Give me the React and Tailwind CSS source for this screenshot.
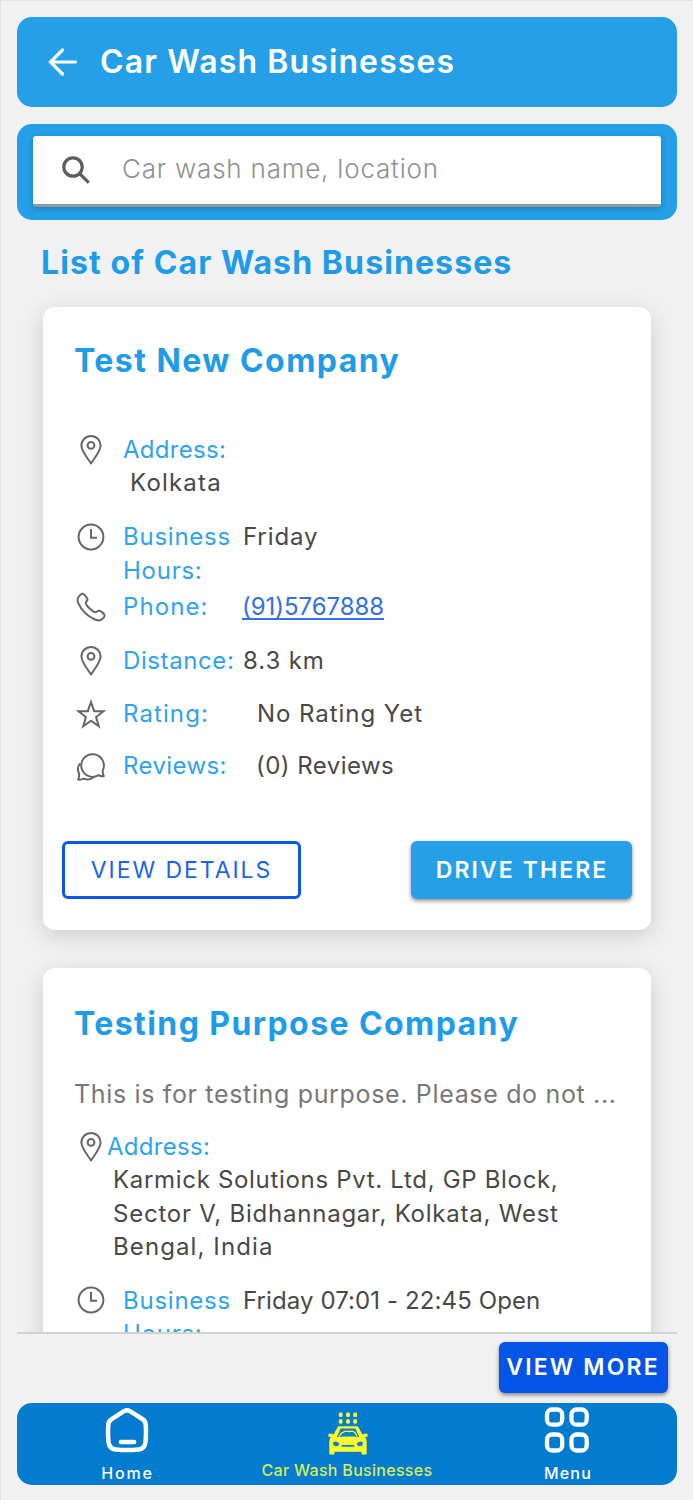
import React from 'react';

const businesses = [
  {
    id: 1,
    name: 'Test New Company',
    address: ['Kolkata'],
    hours: 'Friday',
    phone: '(91)5767888',
    distance: '8.3 km',
    rating: 'No Rating Yet',
    reviews: '(0) Reviews',
  },
  {
    id: 2,
    name: 'Testing Purpose Company',
    description: 'This is for testing purpose. Please do not ...',
    address: ['Karmick Solutions Pvt. Ltd, GP Block,', 'Sector V, Bidhannagar, Kolkata, West', 'Bengal, India'],
    hours: 'Friday 07:01 - 22:45 Open',
  },
];

function Icon({ children }) {
  return (
    <svg className="h-[30px] w-[30px] shrink-0 text-[#666]" viewBox="0 0 30 30" fill="none" stroke="currentColor" strokeWidth="2" strokeLinejoin="round" strokeLinecap="round">
      {children}
    </svg>
  );
}

const PinIcon = () => (
  <Icon>
    <path d="M15 28.5C12.8 24.6 5.4 16.6 5.4 10.6a9.6 9.6 0 0 1 19.2 0c0 6-7.4 14-9.6 17.9z" />
    <circle cx="15" cy="10.4" r="3.4" />
  </Icon>
);

const ClockIcon = () => (
  <Icon>
    <circle cx="15" cy="15" r="12.4" />
    <path d="M15 7v8.7h6" strokeLinecap="butt" strokeLinejoin="miter" />
  </Icon>
);

const PhoneIcon = () => (
  <Icon>
    <path d="M2.6 4.8C3.8 3 5.4 1.6 6.6 1.7c1.7.2 4.2 3.8 4.8 5.4.6 1.6-1.5 2.6-1.6 3.8-.1 2.6 7.2 9.4 9.7 9.3 1.3 0 2.2-2 3.8-1.5 1.7.5 5.1 3 5.3 4.8.1 1.4-1.6 3-3.2 4.1-1.7 1.1-4.3.9-6.4-.1C11.8 24.3 5.5 18 2.4 11.3c-.9-2-1-4.9.2-6.5z" />
  </Icon>
);

const StarIcon = () => (
  <Icon>
    <path strokeLinejoin="miter" d="M15 3l3.2 9.200h9.300l-7.400 5.800 2.700 9.200-7.800-5.500-7.800 5.500 2.700-9.200-7.400-5.800h9.300z" />
  </Icon>
);

const ChatIcon = () => (
  <Icon>
    <path d="M27.8 25.2c-1.7.2-3.9-.2-5.4-1a11.3 11.3 0 1 1 4.3-4.7c-.2 1.9.5 3.9 1.1 5.7z" />
    <path d="M3.6 13c-2.2 3.1-2.1 6.5-.5 9.7.2 1.9-.1 3.9-.9 5.9 2 .2 3.900-.1 5.700-.9 3.100 1.100 6.300.9 8.900-1" />
  </Icon>
);

function Label({ children, className = '' }) {
  return <span className={`text-[#2fa3ec] ${className}`}>{children}</span>;
}

function Line({ icon, label, labelClass, children, className = '' }) {
  return (
    <div className={`flex ${className}`}>
      <div className="flex h-[33px] items-center">{icon}</div>
      <Label className={`ml-[17px] w-[120px] shrink-0 ${labelClass}`}>{label}</Label>
      {children}
    </div>
  );
}

function BusinessCard({ business }) {
  const { description } = business;
  return (
    <div className="mx-auto w-[608px] rounded-[12px] bg-white shadow-[0_6px_24px_rgba(0,0,0,0.15)]">
      <div className={`pl-[31px] ${description ? 'pt-[32.5px]' : 'pt-[31px]'}`}>
        <h2 className={`h-[45px] text-[32px] leading-[45px] font-bold whitespace-nowrap text-[#1e9be9] ${description ? 'tracking-[1.42px]' : 'tracking-[1.45px]'}`}>
          {business.name}
        </h2>
      </div>

      {description && (
        <p className="mt-[31.5px] h-[34px] pl-[31px] text-[25px] leading-[34px] tracking-[0.66px] whitespace-nowrap text-[#777]">{description}</p>
      )}

      <div className="pl-[33px] text-[24px] leading-[33.3px] whitespace-nowrap text-[#484848]">
        {description ? (
          <div className="mt-[19px]">
            <div className="flex">
              <div className="flex h-[33px] items-center"><PinIcon /></div>
              <Label className="ml-[1px] tracking-[0.3px]">Address:</Label>
            </div>
            <div className="pl-[37px]">
              <p className="tracking-[0.68px]">{business.address[0]}</p>
              <p className="tracking-[0.77px]">{business.address[1]}</p>
              <p className="tracking-[1.1px]">{business.address[2]}</p>
            </div>
          </div>
        ) : (
          <div className="mt-[50px]">
            <Line icon={<PinIcon />} label="Address:" labelClass="tracking-[0.3px]" />
            <p className="pl-[54px] tracking-[1.2px]">{business.address[0]}</p>
          </div>
        )}

        <Line icon={<ClockIcon />} label={<>Business<br />Hours:</>} labelClass="tracking-[0.75px]" className={description ? 'mt-[20.5px]' : 'mt-[20.7px]'}>
          <span className={description ? 'tracking-[0.1px]' : 'tracking-[0.9px]'}>{business.hours}</span>
        </Line>

        {business.phone && (
          <>
            <Line icon={<PhoneIcon />} label="Phone:" labelClass="tracking-[1.1px]" className="mt-[3.3px]">
              <a className="-ml-[1px] tracking-[-0.05px] text-[#3171e0] underline decoration-2 underline-offset-3" href="tel:915767888">{business.phone}</a>
            </Line>
            <Line icon={<PinIcon />} label="Distance:" labelClass="tracking-[0.6px]" className="mt-[21px]">
              <span className="tracking-[0.9px]">{business.distance}</span>
            </Line>
            <Line icon={<StarIcon />} label="Rating:" labelClass="tracking-[1.1px]" className="mt-[19.3px]">
              <span className="ml-[14px] tracking-[0.95px]">{business.rating}</span>
            </Line>
            <Line icon={<ChatIcon />} label="Reviews:" labelClass="tracking-[0.4px]" className="mt-[19px]">
              <span className="ml-[13px] tracking-[0.45px]">{business.reviews}</span>
            </Line>
          </>
        )}
      </div>

      {business.phone && (
        <div className="mt-[58.5px] flex justify-between px-[19px] text-[23px]">
          <button className="h-[58px] w-[239px] rounded-[6px] border-3 border-[#0a58ea] bg-white font-normal tracking-[1.95px] whitespace-nowrap text-[#1a64ec]">
            VIEW DETAILS
          </button>
          <button className="h-[58px] w-[221px] rounded-[6px] bg-[#249fe8] pl-[1px] font-semibold tracking-[2.08px] whitespace-nowrap text-white shadow-[0_2px_4px_rgba(0,0,0,0.45)]">
            DRIVE THERE
          </button>
        </div>
      )}
      <div className="h-[31px]" />
    </div>
  );
}

function CarWashIcon() {
  return (
    <svg className="ml-[2px] h-[44px] w-[40px]" viewBox="0 0 40 44" fill="#fdfd2e">
      {[12.5, 19.8, 27].map((x) => (
        <g key={x}>
          <rect x={x - 1.7} y="1.5" width="3.8" height="4.6" rx="1.4" />
          <rect x={x - 1.7} y="8.3" width="3.8" height="4.4" rx="1.4" />
        </g>
      ))}
      <path d="M11.500 15.300h17c1 0 1.600.4 2.100 1.200l4 7.200 1-1h3.200c.5 0 .8.4.8.900v1.400c0 .6-.5 1-1 1h-1.400c1 1.700 1.500 3.500 1.500 5.500v10.600c0 1-.5 1.500-1.400 1.500h-2.400c-.9 0-1.400-.5-1.400-1.500v-1.400h-27v1.400c0 1-.5 1.500-1.400 1.500H2.700c-.9 0-1.400-.5-1.400-1.500V31.500c0-2 .5-3.800 1.500-5.500H1.400c-.5 0-1-.4-1-1v-1.400c0-.5.3-.9.800-.9h3.200l1 1 4-7.200c.5-.8 1.100-1.200 2.100-1.200z" />
      <g fill="#0b7fc9">
        <path d="M12.6 17.5h14.8l3.9 8.7c-6-.8-16.6-.8-22.6 0z" />
        <ellipse cx="8" cy="32.8" rx="3.1" ry="2.2" transform="rotate(15 8 32.8)" />
        <ellipse cx="32" cy="32.8" rx="3.1" ry="2.2" transform="rotate(-15 32 32.8)" />
        <rect x="13.5" y="34" width="13" height="1.8" rx=".9" />
      </g>
      <path d="M11 25.4c1.5-3 4-4.7 7-5.3l3 .6 3-.6c3 .6 4 2.3 5 5.3" fill="none" stroke="#fdfd2e" strokeWidth="1.2" />
    </svg>
  );
}

function BottomNav() {
  return (
    <nav className="mx-auto flex h-[82px] w-[660px] rounded-[15px] bg-[#037bce] text-[16px] leading-[20px] font-medium whitespace-nowrap text-white">
      <div className="flex w-[220px] flex-col items-center pt-[4px]">
        <svg className="h-[46px] w-[46px]" viewBox="0 0 44 44" fill="none" stroke="white" strokeWidth="4.3" strokeLinejoin="round" strokeLinecap="round">
          <path d="M19.5 3.8c1.7-1 3.3-1 5 0l12.2 7.7c2 1.3 3.2 3 3.2 5.500.4 6 .4 11.500-.3 17-.6 4-2.800 6.200-6.600 6.600-7.300.7-14.700.7-22 0-3.800-.4-6-2.600-6.600-6.600-.7-5.500-.7-11-.3-17 0-2.500 1.200-4.200 3.200-5.500z" />
          <path d="M16.2 33.5h12.6" />
        </svg>
        <span className="mt-[9.5px] pl-[1px] tracking-[1.8px]">Home</span>
      </div>
      <div className="flex w-[220px] flex-col items-center pt-[8px] text-[#d6ef58]">
        <CarWashIcon />
        <span className="mt-[5px] tracking-[0.3px]">Car Wash Businesses</span>
      </div>
      <div className="flex w-[220px] flex-col items-center pt-[3px]">
        <svg className="h-[48px] w-[46px]" viewBox="0 0 46 48" fill="none" stroke="white" strokeWidth="4.3">
          <rect x="3" y="3.5" width="15.2" height="15.2" rx="5" />
          <rect x="27.5" y="3.5" width="15.2" height="15.2" rx="5" />
          <rect x="3" y="28.5" width="15.2" height="16" rx="5" />
          <rect x="27.5" y="28.5" width="15.2" height="16" rx="5" />
        </svg>
        <span className="mt-[8.5px] pl-[2px] tracking-[1.2px]">Menu</span>
      </div>
    </nav>
  );
}

function App() {
  return (
    <div className="h-[1500px] w-[693px] overflow-hidden border-t border-l border-[#e3e3ea] bg-[#f1f1f1] font-['Inter','Liberation_Sans',sans-serif]">
      <div className="flex h-[1331px] flex-col overflow-hidden pt-[16px]">
        <header className="mx-auto flex h-[90px] w-[660px] shrink-0 items-center rounded-[15px] bg-[#249fe8] pl-[31px] text-white">
          <svg className="h-[30px] w-[30px]" viewBox="0 0 30 30" fill="none" stroke="white" strokeWidth="3.2" strokeLinecap="round">
            <path d="M14.5 3L2.5 15l12 12M3 15h24.5" />
          </svg>
          <h1 className="ml-[22px] text-[32px] font-semibold tracking-[1.12px] whitespace-nowrap">Car Wash Businesses</h1>
        </header>

        <div className="mx-auto mt-[16.5px] h-[96px] w-[660px] shrink-0 rounded-[15px] bg-[#249fe8] px-[16px] pt-[12.5px]">
          <div className="flex h-[71px] items-center rounded-[3px] border-b-3 border-[#8f999f] bg-white pl-[28px] shadow-[0_2px_6px_rgba(0,0,0,0.2)]">
            <svg className="h-[30px] w-[30px]" viewBox="0 0 30 30" fill="none" stroke="#5c5c5c" strokeWidth="3.2">
              <circle cx="12" cy="12" r="9.2" />
              <path d="M18.7 18.7l9 9" />
            </svg>
            <span className="-mt-[3px] ml-[31px] text-[26px] font-light tracking-[0.8px] whitespace-nowrap text-[#909090]">Car wash name, location</span>
          </div>
        </div>

        <h2 className="mt-[22.5px] h-[42px] shrink-0 pl-[40px] text-[32px] leading-[42px] font-bold tracking-[1.1px] whitespace-nowrap text-[#1e9be9]">
          List of Car Wash Businesses
        </h2>

        <div className="mt-[23px] flex flex-col gap-[38px]">
          {businesses.map((b) => <BusinessCard key={b.id} business={b} />)}
        </div>
      </div>

      {/* View more bar */}
      <div className="mx-auto flex h-[71px] w-[660px] justify-end border-t-2 border-[#d2d2d2] pt-[8px] pr-[9.5px]">
        <button className="h-[51px] w-[169px] rounded-[6px] bg-[#0454e8] text-[23px] font-semibold tracking-[2.15px] whitespace-nowrap text-white shadow-[0_2px_4px_rgba(0,0,0,0.45)]">
          VIEW MORE
        </button>
      </div>

      <BottomNav />
    </div>
  );
}

export default App;
